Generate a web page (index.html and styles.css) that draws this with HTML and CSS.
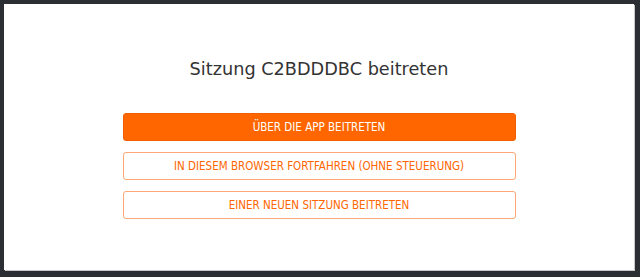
FILE: index.html
```html
<html>
<head>
    <meta charset="utf-8">
    <link rel="stylesheet" href="styles.css">
</head>
<body>
    <div class="dialog">
        <h1 class="title">Sitzung C2BDDDBC beitreten</h1>
        <div class="actions">
            <button class="btn btnPrimary">ÜBER DIE APP BEITRETEN</button>
            <button class="btn btnOutline">IN DIESEM BROWSER FORTFAHREN (OHNE STEUERUNG)</button>
            <button class="btn btnOutline">EINER NEUEN SITZUNG BEITRETEN</button>
        </div>
    </div>
</body>
</html>
```

FILE: styles.css
```css
html, body {
    margin: 0px;
    padding: 0px;
}
body {
    background-color: #2b2f33;
    width: 640px;
    height: 277px;
    padding: 4px 6px 7px 4px;
    box-sizing: border-box;
    font-family: "DejaVu Sans", Verdana, sans-serif;
}
.dialog {
    background-color: #ffffff;
    height: 100%;
    box-shadow: 1px 1px 0px #c8c8c8;
    display: flex;
    flex-direction: column;
    align-items: center;
}
.title {
    margin: 53px 0px 0px 0px;
    font-size: 17.7px;
    font-weight: normal;
    color: #333333;
    line-height: 24px;
}
.actions {
    margin-top: 32px;
    width: 393px;
    display: flex;
    flex-direction: column;
    gap: 11px;
}
.btn {
    height: 28px;
    border-radius: 3px;
    font-family: "DejaVu Sans Condensed", Tahoma, sans-serif;
    font-size: 11.5px;
    cursor: pointer;
}
.btnPrimary {
    background-color: #ff6600;
    border: 1px solid #f06000;
    color: #ffffff;
}
.btnOutline {
    background-color: #ffffff;
    border: 1px solid #ffa775;
    color: #ff6600;
}
```
